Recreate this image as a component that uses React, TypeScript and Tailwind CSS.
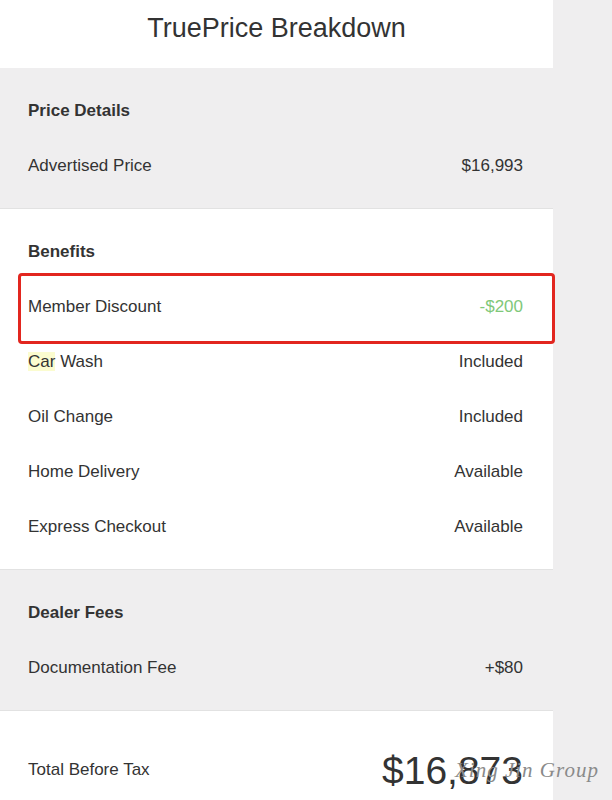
import React from 'react';

type Row = { label: string; value: string; tone?: 'green'; mark?: boolean };

const sections: { title: string; bg: string; rows: Row[] }[] = [
  {
    title: 'Price Details',
    bg: 'bg-[#efeeef]',
    rows: [{ label: 'Advertised Price', value: '$16,993' }],
  },
  {
    title: 'Benefits',
    bg: 'bg-white',
    rows: [
      { label: 'Member Discount', value: '-$200', tone: 'green' },
      { label: 'Car Wash', value: 'Included', mark: true },
      { label: 'Oil Change', value: 'Included' },
      { label: 'Home Delivery', value: 'Available' },
      { label: 'Express Checkout', value: 'Available' },
    ],
  },
  {
    title: 'Dealer Fees',
    bg: 'bg-[#efeeef]',
    rows: [{ label: 'Documentation Fee', value: '+$80' }],
  },
];

function Label({ row }: { row: Row }) {
  if (!row.mark) return <span>{row.label}</span>;
  const [first, ...rest] = row.label.split(' ');
  return (
    <span>
      <span className="bg-[#fbfccf]">{first}</span> {rest.join(' ')}
    </span>
  );
}

export default function App() {
  return (
    <div className="flex min-h-[800px] bg-[#efeeef] font-['Liberation_Sans',Arial,sans-serif] text-[#333]">
      <div className="relative w-[553px] shrink-0 bg-white">
        <div className="flex h-[68px] items-center justify-center pb-[12px] text-[27px]">
          TruePrice Breakdown
        </div>

        {sections.map((s) => (
          <div key={s.title} className={`${s.bg} border-b border-[#e2e2e2] px-[28px] py-[15px]`}>
            <div className="flex h-[55px] items-center text-[17px] font-bold">{s.title}</div>
            {s.rows.map((r) => (
              <div key={r.label} className="flex h-[55px] items-center justify-between pr-[2px] text-[17px]">
                <Label row={r} />
                <span className={r.tone === 'green' ? 'text-[#7fc87a]' : ''}>{r.value}</span>
              </div>
            ))}
          </div>
        ))}

        <div className="px-[28px] pt-[29px] pb-[20px]">
          <div className="flex h-[60px] items-center justify-between pr-[2px]">
            <span className="text-[17px]">Total Before Tax</span>
            <span className="text-[39px] leading-none">$16,873</span>
          </div>
        </div>

        {/* annotation box over Member Discount */}
        <div className="pointer-events-none absolute left-[18px] top-[273px] h-[71px] w-[537px] rounded-[4px] border-[3px] border-[#e2261f]" />
      </div>

      {/* watermark */}
      <div className="pointer-events-none absolute left-[455px] top-[755px] font-['Liberation_Serif',serif] text-[21px] italic tracking-[1px] text-[#8a8a8a]">
        Xing Jin Group
      </div>
    </div>
  );
}
